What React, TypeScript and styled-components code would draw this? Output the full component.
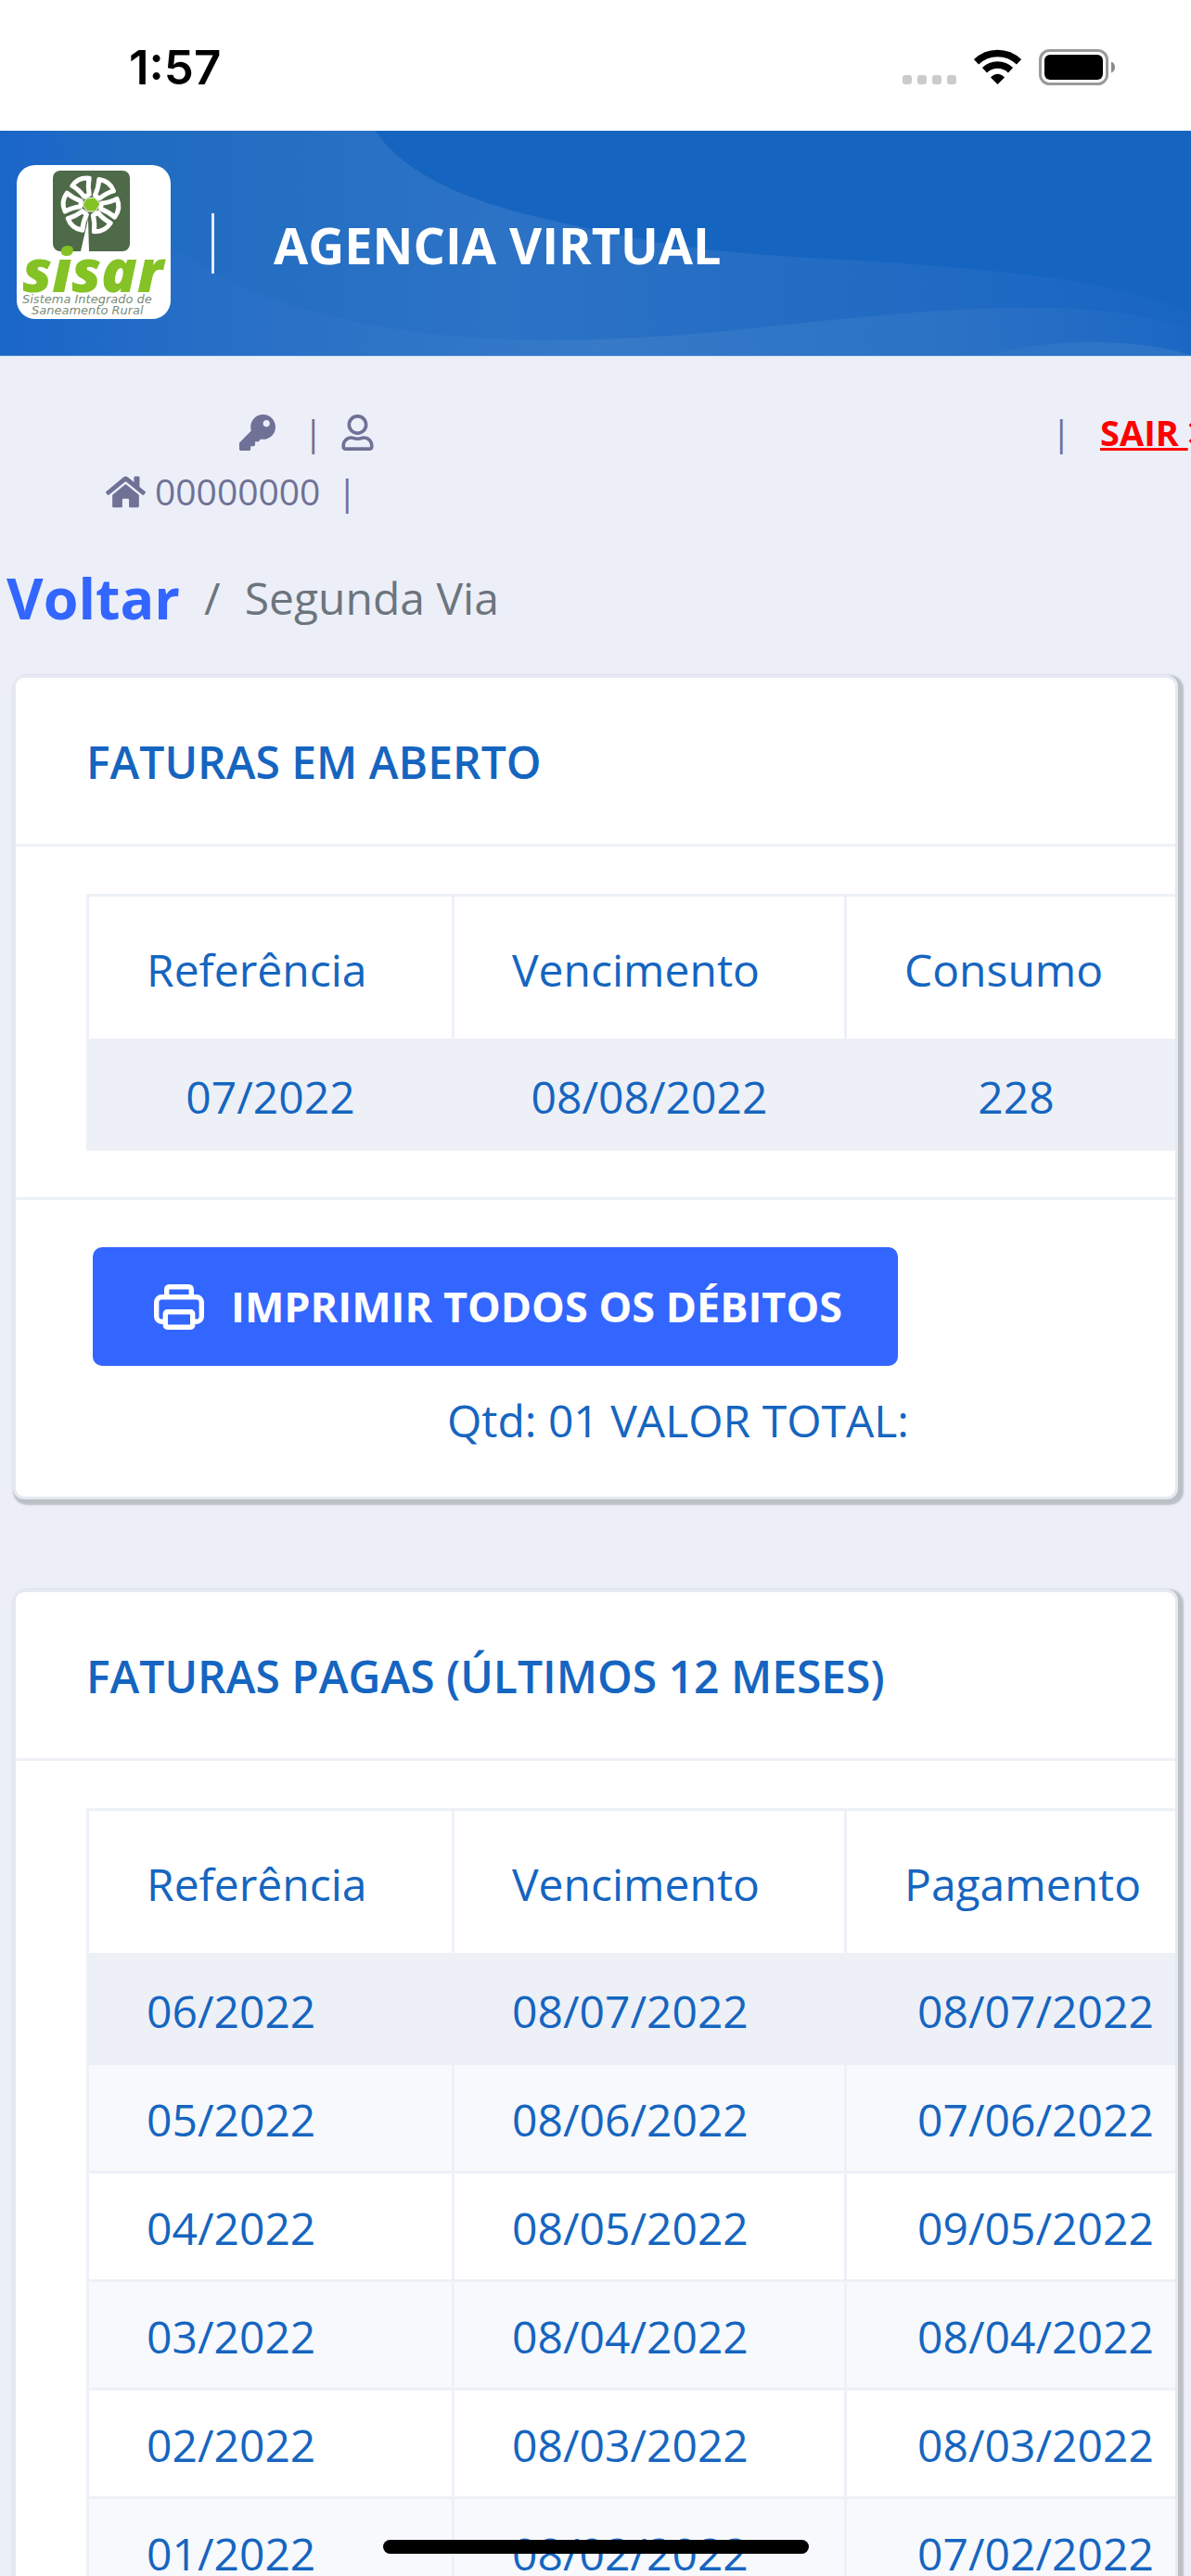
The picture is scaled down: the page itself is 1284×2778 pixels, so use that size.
import React from "react";
import styled, { createGlobalStyle, css } from "styled-components";
import { FaHome, FaKey, FaRegUser } from "react-icons/fa";

const BLUE = "#1565c0";
const LINE = "#edf1f7";

const GlobalStyle = createGlobalStyle`
  *, *::before, *::after { box-sizing: border-box; }
  body {
    margin: 0;
    background: #eceff8;
    font-family: "Open Sans", "Noto Sans", sans-serif;
  }
`;

const Screen = styled.div`
  height: 100vh;
  overflow: hidden auto;
  scrollbar-width: none;
`;

/* ---------- status bar ---------- */

const StatusBar = styled.div`
  display: flex;
  align-items: center;
  justify-content: space-between;
  height: 141px;
  padding: 4px 81px 0 139px;
  background: #fff;
`;

const Clock = styled.time`
  font: 600 51px/60px Inter, sans-serif;
  color: #000;
`;

const StatusIcons = styled.svg`
  display: block;
  width: 230px;
  height: 40px;
`;

/* ---------- banner ---------- */

const Banner = styled.header`
  position: relative;
  display: flex;
  align-items: center;
  height: 243px;
  padding: 0 18px;
  background: ${BLUE};
  border-bottom: 1px solid #4a87d0;
`;

const Waves = styled.svg`
  position: absolute;
  inset: 0;
  width: 100%;
  height: 100%;
`;

const Logo = styled.svg`
  position: relative;
  flex: none;
  width: 166px;
  height: 166px;
  margin-bottom: 2px;
`;

const BannerRule = styled.span`
  position: relative;
  width: 3px;
  height: 65px;
  margin: 0 64px 0 44px;
  background: #e6e9f2;
`;

const BannerTitle = styled.h1`
  position: relative;
  margin: 0;
  padding-top: 4px;
  font-size: 54px;
  line-height: 72px;
  font-weight: 700;
  color: #fff;
`;

/* ---------- account strip ---------- */

const Account = styled.section`
  padding-top: 50px;
  overflow: hidden;
  font-size: 39px;
  line-height: 64px;
  color: #6f7196;
`;

const AccountLine = styled.div<{ $indent: number }>`
  display: flex;
  align-items: center;
  height: 64px;
  padding-left: ${(p) => p.$indent}px;
  white-space: nowrap;

  svg { flex: none; }
`;

const Pipe = styled.span<{ $before: number; $after: number }>`
  margin: 0 ${(p) => p.$after}px 0 ${(p) => p.$before}px;
`;

const CustomerName = styled.span`
  flex: 1;
`;

const AccountNumber = styled.span`
  margin-left: 10px;
`;

const Logout = styled.a`
  flex: none;
  width: 98px;
  font-size: 38px;
  font-weight: 700;
  color: #f00;
  text-decoration: underline;
  text-decoration-thickness: 3px;
`;

const LogoutIcon = styled.span`
  display: inline-block;
`;

/* ---------- breadcrumb ---------- */

const Breadcrumb = styled.nav`
  display: flex;
  align-items: center;
  gap: 26px;
  padding: 41px 7px;
  font-size: 48px;
  line-height: 84px;
  color: #6c757d;
`;

const BackLink = styled.a`
  font-size: 61px;
  font-weight: 700;
  color: #3366ff;
  text-decoration: none;
`;

/* ---------- cards ---------- */

const Cards = styled.main`
  display: grid;
  gap: 97px;
  padding: 0 14px 96px;
`;

const Card = styled.section`
  min-width: 0;
  overflow: hidden;
  background: #fff;
  border: 3px solid #e4e9f2;
  border-radius: 12px;
  box-shadow: 3px 3px 2px 3px #bcc0c5;
  font-size: 48px;
  line-height: 62px;
  color: ${BLUE};
`;

const CardTitle = styled.h2`
  margin: 0;
  padding: 60px 76px 57px;
  border-bottom: 3px solid ${LINE};
  font-size: 48px;
  line-height: 62px;
  font-weight: 600;
`;

const CardBody = styled.div`
  padding: 51px 76px 50px;
`;

const CardFooter = styled.footer`
  padding: 51px 76px;
  border-top: 3px solid ${LINE};
`;

const Total = styled.p`
  margin: 28px 0 0;
  padding-left: 389px;
`;

const PrintButton = styled.button`
  display: flex;
  align-items: center;
  gap: 29px;
  height: 128px;
  margin-left: 7px;
  padding: 0 60px 0 66px;
  border: 0;
  border-radius: 10px;
  background: #3366ff;
  color: #fff;
  font: 700 45px/60px "Open Sans", sans-serif;
  white-space: nowrap;
`;

/* ---------- tables ---------- */

const Table = styled.table`
  width: max-content;
  border-collapse: collapse;
`;

const cell = css`
  padding: 4px 62px 0;
  border: 3px solid ${LINE};
  font-weight: 400;
  white-space: nowrap;
`;

const HeadCell = styled.th<{ $width: number }>`
  ${cell}
  width: ${(p) => p.$width}px;
  height: 156px;
  text-align: left;
`;

const Cell = styled.td<{ $center?: boolean }>`
  ${cell}
  height: 117px;
  text-align: ${(p) => (p.$center ? "center" : "left")};
`;

const Row = styled.tr<{ $selected?: boolean }>`
  height: ${(p) => (p.$selected ? 118 : 117)}px;
  background: ${(p) => (p.$selected ? "#edf0f7" : "#fff")};

  &:nth-child(even) { background: #f7f9fc; }
`;

const HomeIndicator = styled.div`
  position: fixed;
  bottom: 24px;
  left: 50%;
  width: 459px;
  height: 15px;
  margin-left: -229px;
  border-radius: 8px;
  background: #000;
`;

type Column = { label: string; width: number; center?: boolean };

function InvoiceTable({ columns, rows }: { columns: Column[]; rows: string[][] }) {
  return (
    <Table>
      <thead>
        <tr>
          {columns.map((c) => (
            <HeadCell key={c.label} scope="col" $width={c.width}>{c.label}</HeadCell>
          ))}
        </tr>
      </thead>
      <tbody>
        {rows.map((r, n) => (
          <Row key={r[0]} $selected={n === 0}>
            {r.map((value, i) => (
              <Cell key={i} $center={columns[i].center}>{value}</Cell>
            ))}
          </Row>
        ))}
      </tbody>
    </Table>
  );
}

function CrossIcon() {
  return (
    <svg width="28" height="28" viewBox="0 0 28 28" stroke="#f00" strokeWidth="7" aria-hidden="true">
      <path d="M3 3L25 25M25 3L3 25" />
    </svg>
  );
}

function PrinterIcon() {
  return (
    <svg width="54" height="49" viewBox="0 0 54 49" fill="none" stroke="#fff" strokeWidth="5.4" aria-hidden="true">
      <path d="M13.7 13V5.2a2.5 2.5 0 0 1 2.5-2.5h21.6a2.5 2.5 0 0 1 2.5 2.5V13" />
      <path d="M12 40.3H8.2a5.5 5.5 0 0 1-5.5-5.5V19.3a5.5 5.5 0 0 1 5.5-5.5h37.6a5.5 5.5 0 0 1 5.5 5.5v15.5a5.5 5.5 0 0 1-5.5 5.5H42" />
      <rect x="12.3" y="29.8" width="29.4" height="16.5" rx="2" />
    </svg>
  );
}

function SisarLogo() {
  const petals = [-24, 38, 97, 153, 219, 276];
  return (
    <Logo viewBox="0 0 166 166" role="img" aria-label="sisar">
      <rect width="166" height="166" rx="20" fill="#fff" />
      <rect x="39" y="6" width="83" height="87" rx="8" fill="#4e6a48" />
      <path d="M69 93L77 58l1 35z" fill="#fff" />
      <g transform="translate(80 43)" fill="none" stroke="#fff" strokeWidth="5" strokeLinejoin="round">
        {petals.map((a) => (
          <path key={a} transform={`rotate(${a})`} d="M-3 -11Q-5 -20 -10 -27Q0 -33 10 -27Q5 -20 3 -11Z" />
        ))}
      </g>
      <path d="M75 36l9-1 6 7-5 8-9 0-5-7z" fill="#84c225" stroke="#fff" strokeWidth="1" />
      <text x="6" y="137" fontFamily="Open Sans, sans-serif" fontSize="64" fontWeight="800" fontStyle="italic" fill="#84c225">sisar</text>
      <g fontFamily="DejaVu Sans, sans-serif" fontSize="13" fontStyle="oblique" fill="#7b8c78">
        <text x="6" y="149">Sistema Integrado de</text>
        <text x="16" y="161">Saneamento Rural</text>
      </g>
    </Logo>
  );
}

function BannerWaves() {
  return (
    <Waves viewBox="0 0 1284 243" preserveAspectRatio="none" aria-hidden="true">
      <defs>
        <linearGradient id="waveBack" x1="0" x2="1" y1="0" y2="0">
          <stop offset="0" stopColor="#1c69c8" />
          <stop offset=".12" stopColor="#206cc1" />
          <stop offset=".42" stopColor="#2c73c6" />
          <stop offset=".7" stopColor="#236cc3" />
          <stop offset="1" stopColor="#1865c2" />
        </linearGradient>
        <linearGradient id="waveFront" x1="0" x2="1" y1="0" y2="0">
          <stop offset="0" stopColor="#1a66c8" />
          <stop offset=".2" stopColor="#2870c6" />
          <stop offset=".5" stopColor="#367ac8" />
          <stop offset=".8" stopColor="#2b72c5" />
          <stop offset="1" stopColor="#1b67c4" />
        </linearGradient>
      </defs>
      <path
        fill="url(#waveBack)"
        d="M0 0H405C430 40 490 72 573 92C660 113 740 129 819 134C960 144 1190 150 1284 198V243H0Z"
      />
      <path
        fill="url(#waveFront)"
        d="M0 0H61C80 40 140 100 229 152C300 194 430 227 590 227C740 227 860 206 983 197C1100 188 1220 188 1284 216V243H0Z"
      />
      <path fill="#2d73c6" d="M1065 243C1120 226 1220 222 1284 243Z" />
    </Waves>
  );
}

export default function App() {
  return (
    <Screen>
      <GlobalStyle />
      <StatusBar>
        <Clock>1:57</Clock>
        <StatusIcons viewBox="0 0 230 40" aria-hidden="true">
          <g fill="#cbcbcb">
            <rect x="0" y="28" width="10" height="10" rx="3" />
            <rect x="16" y="28" width="10" height="10" rx="3" />
            <rect x="32" y="28" width="10" height="10" rx="3" />
            <rect x="48" y="28" width="10" height="10" rx="3" />
          </g>
          <g fill="none" stroke="#000">
            <path d="M79.500 13.800A33 33 0 0 1 125.500 13.800" strokeWidth="7.500" />
            <path d="M88.500 22.800A20 20 0 0 1 116.500 22.800" strokeWidth="7.500" />
          </g>
          <path d="M102.500 38L95 30.500Q102.500 23 110 30.500Z" fill="#000" />
          <rect x="148.500" y="1.500" width="72" height="36" rx="10" fill="none" stroke="#9a9a9a" strokeWidth="3" />
          <rect x="153" y="6" width="63" height="27" rx="6" fill="#000" />
          <path d="M225 13.500Q229 15 229 19.500T225 25.500Z" fill="#8a8a8a" />
        </StatusIcons>
      </StatusBar>

      <Banner>
        <BannerWaves />
        <SisarLogo />
        <BannerRule />
        <BannerTitle>AGENCIA VIRTUAL</BannerTitle>
      </Banner>

      <Account>
        <AccountLine $indent={258}>
          <FaKey size={39} />
          <Pipe $before={30} $after={18}>|</Pipe>
          <FaRegUser size={39} />
          <CustomerName />
          <Pipe $before={0} $after={31}>|</Pipe>
          <Logout href="#sair">
            SAIR <LogoutIcon><CrossIcon /></LogoutIcon>
          </Logout>
        </AccountLine>
        <AccountLine $indent={114}>
          <FaHome size={43} />
          <AccountNumber>00000000</AccountNumber>
          <Pipe $before={18} $after={0}>|</Pipe>
        </AccountLine>
      </Account>

      <Breadcrumb aria-label="breadcrumb">
        <BackLink href="#voltar">Voltar</BackLink>
        <span>/</span>
        <span>Segunda Via</span>
      </Breadcrumb>

      <Cards>
        <Card>
          <CardTitle>FATURAS EM ABERTO</CardTitle>
          <CardBody>
            <InvoiceTable
              columns={[
                { label: "Referência", width: 394, center: true },
                { label: "Vencimento", width: 423, center: true },
                { label: "Consumo", width: 368, center: true },
              ]}
              rows={[["07/2022", "08/08/2022", "228"]]}
            />
          </CardBody>
          <CardFooter>
            <PrintButton type="button">
              <PrinterIcon />
              IMPRIMIR TODOS OS DÉBITOS
            </PrintButton>
            <Total>Qtd: 01 VALOR TOTAL:</Total>
          </CardFooter>
        </Card>

        <Card>
          <CardTitle>FATURAS PAGAS (ÚLTIMOS 12 MESES)</CardTitle>
          <CardBody>
            <InvoiceTable
              columns={[
                { label: "Referência", width: 394 },
                { label: "Vencimento", width: 423 },
                { label: "Pagamento", width: 410, center: true },
              ]}
              rows={[
                ["06/2022", "08/07/2022", "08/07/2022"],
                ["05/2022", "08/06/2022", "07/06/2022"],
                ["04/2022", "08/05/2022", "09/05/2022"],
                ["03/2022", "08/04/2022", "08/04/2022"],
                ["02/2022", "08/03/2022", "08/03/2022"],
                ["01/2022", "08/02/2022", "07/02/2022"],
              ]}
            />
          </CardBody>
        </Card>
      </Cards>
      <HomeIndicator />
    </Screen>
  );
}
